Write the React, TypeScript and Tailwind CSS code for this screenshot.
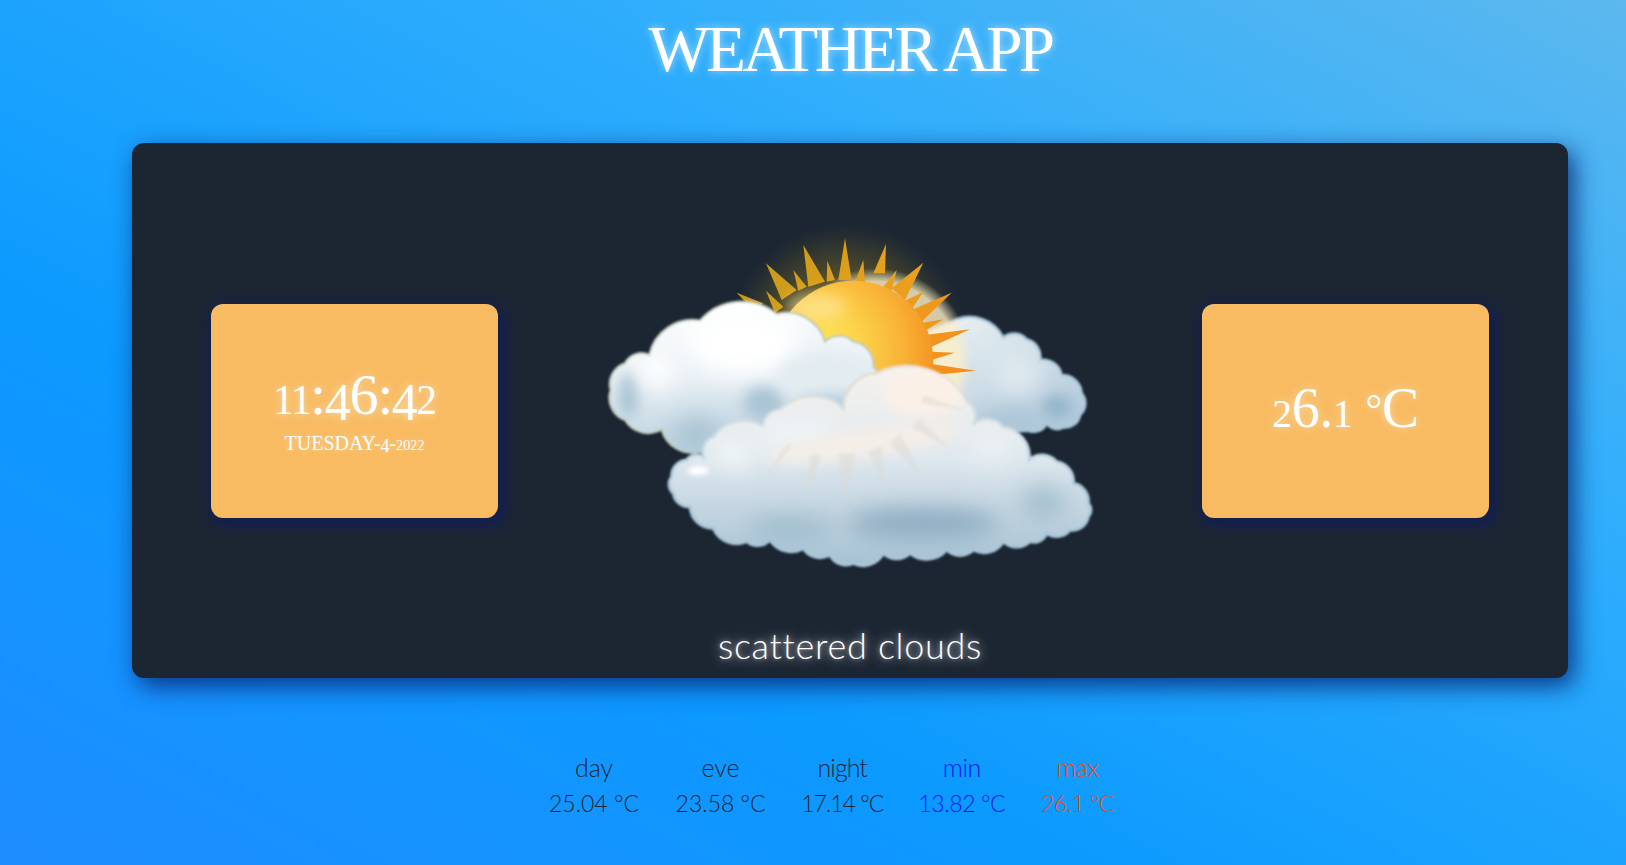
const serif = "font-['Liberation_Serif','Times_New_Roman',serif]";

function OldStyle({ text }: { text: string }) {
  return (
    <>
      {text.split("").map((c, i) => {
        if ("012".includes(c)) {
          return (
            <span key={i} className="text-[0.71em]">
              {c}
            </span>
          );
        }
        if ("34579".includes(c)) {
          return (
            <span key={i} className="inline-block translate-y-[0.12em] text-[0.9em] leading-none">
              {c}
            </span>
          );
        }
        return <span key={i}>{c}</span>;
      })}
    </>
  );
}

type P = [number, number] | [number, number, number];

function outline(pts: P[]) {
  let d = `M${pts[0][0]} ${pts[0][1]}`;
  for (let i = 1; i <= pts.length; i++) {
    const a = pts[i - 1];
    const b = pts[i % pts.length];
    if (a.length === 3) {
      d += ` L${b[0]} ${b[1]}`;
    } else {
      const r = Math.hypot(b[0] - a[0], b[1] - a[1]) * 0.72;
      d += ` A${r.toFixed(1)} ${r.toFixed(1)} 0 0 1 ${b[0]} ${b[1]}`;
    }
  }
  return d + " Z";
}

const backLeft = outline([
  [62, 510], [105, 430], [178, 405], [330, 302], [560, 282], [705, 365], [790, 365], [850, 440],
  [860, 470, 1], [800, 700, 1], [330, 695], [215, 628], [105, 600],
]);
const backRight = outline([
  [1000, 340, 1], [1090, 302], [1240, 352], [1310, 358], [1350, 420], [1415, 465], [1475, 520],
  [1470, 585], [1420, 622], [1370, 610], [1315, 632, 1], [1200, 640, 1], [1000, 520, 1],
]);
const front = outline([
  [860, 460], [1130, 545], [1150, 612], [1240, 622], [1318, 718], [1400, 725], [1450, 790],
  [1495, 850], [1495, 890], [1440, 930], [1370, 940], [1320, 965], [1240, 965], [1150, 990],
  [1070, 990], [960, 1000], [880, 1000], [790, 1030], [720, 1005], [640, 985], [540, 960],
  [470, 965], [370, 925], [300, 860], [250, 820], [245, 770], [290, 720], [340, 710], [370, 650],
  [520, 620], [570, 570], [760, 565],
]);

const rays: [number, number, number, number, number, number][] = [
  [440, 218, 520, 250, 490, 270],
  [528, 212, 580, 260, 555, 280],
  [528, 130, 620, 210, 575, 240],
  [610, 150, 650, 200, 625, 212],
  [640, 75, 705, 185, 655, 200],
  [712, 122, 735, 180, 710, 185],
  [765, 55, 785, 180, 745, 180],
  [820, 120, 825, 190, 795, 185],
  [888, 72, 885, 160, 850, 160],
  [920, 150, 905, 215, 880, 200],
  [1000, 128, 945, 240, 905, 205],
  [1000, 215, 960, 275, 940, 245],
  [1085, 218, 990, 310, 965, 270],
  [1060, 298, 1000, 335, 990, 310],
  [1140, 328, 1015, 385, 1005, 345],
  [1095, 398, 1025, 420, 1020, 395],
  [1158, 452, 1030, 465, 1025, 432],
];

const F = { x: "-150%", y: "-150%", width: "400%", height: "400%" };

function WeatherIcon() {
  return (
    <svg viewBox="0 0 1560 1080" className="mb-[22px] h-[360px] w-[520px] shrink-0">
      <defs>
        <radialGradient id="sun" cx="0.3" cy="0.42" r="0.75">
          <stop offset="0" stopColor="#fde657" />
          <stop offset="0.3" stopColor="#fcd54c" />
          <stop offset="0.68" stopColor="#f9b236" />
          <stop offset="1" stopColor="#f28f1f" />
        </radialGradient>
        <radialGradient id="halo">
          <stop offset="0.5" stopColor="#b8961f" stopOpacity="0.42" />
          <stop offset="0.8" stopColor="#8f7c20" stopOpacity="0.2" />
          <stop offset="1" stopColor="#6a6420" stopOpacity="0" />
        </radialGradient>
        <radialGradient id="glow">
          <stop offset="0.86" stopColor="#fbeec6" stopOpacity="0.8" />
          <stop offset="1" stopColor="#fbeec6" stopOpacity="0" />
        </radialGradient>
        <linearGradient id="ray" gradientUnits="userSpaceOnUse" x1="560" y1="100" x2="1100" y2="460">
          <stop offset="0" stopColor="#c99a1a" />
          <stop offset="0.5" stopColor="#e8a21e" />
          <stop offset="1" stopColor="#f58d1c" />
        </linearGradient>
        <linearGradient id="cl" x1="0.35" y1="0" x2="0.5" y2="1">
          <stop offset="0" stopColor="#ffffff" />
          <stop offset="0.5" stopColor="#e6eef3" />
          <stop offset="1" stopColor="#b4cddb" />
        </linearGradient>
        <linearGradient id="cr" x1="0" y1="0" x2="0.8" y2="1">
          <stop offset="0" stopColor="#eef3f5" />
          <stop offset="1" stopColor="#b2cadb" />
        </linearGradient>
        <linearGradient id="cf" x1="0.5" y1="0" x2="0.5" y2="1">
          <stop offset="0" stopColor="#f6f2ee" />
          <stop offset="0.45" stopColor="#dfe8ee" />
          <stop offset="1" stopColor="#a7c2d3" />
        </linearGradient>
        <linearGradient id="rim" gradientUnits="userSpaceOnUse" x1="800" y1="440" x2="800" y2="800">
          <stop offset="0" stopColor="#e8e0d2" />
          <stop offset="0.5" stopColor="#cfdde5" />
          <stop offset="1" stopColor="#a9c6d8" />
        </linearGradient>
        <filter id="b2"><feGaussianBlur stdDeviation="2.5" /></filter>
        <filter id="b6" {...F}><feGaussianBlur stdDeviation="6" /></filter>
        <filter id="b20" {...F}><feGaussianBlur stdDeviation="20" /></filter>
        <filter id="b35" {...F}><feGaussianBlur stdDeviation="35" /></filter>
        <clipPath id="clipL"><path d={backLeft} /></clipPath>
        <clipPath id="clipR"><path d={backRight} /></clipPath>
        <clipPath id="clipF"><path d={front} /></clipPath>
      </defs>

      <circle cx="770" cy="370" r="360" fill="url(#halo)" />
      <g filter="url(#b2)">
        <path d={backRight} fill="url(#cr)" stroke="#a9c6d8" strokeWidth="8" />
        <g clipPath="url(#clipR)">
          <ellipse cx="1280" cy="460" rx="70" ry="70" fill="#dfe9ef" filter="url(#b35)" />
          <ellipse cx="1400" cy="560" rx="45" ry="35" fill="#93b4c9" filter="url(#b20)" />
          <ellipse cx="1260" cy="600" rx="120" ry="30" fill="#a4c1d3" filter="url(#b35)" />
        </g>
      </g>
      <circle cx="860" cy="430" r="285" fill="url(#glow)" />
      {rays.map((r, i) => (
        <polygon key={i} points={`${r[0]},${r[1]} ${r[2]},${r[3]} ${r[4]},${r[5]}`} fill="url(#ray)" />
      ))}
      <circle cx="790" cy="422" r="240" fill="url(#sun)" />
      <ellipse cx="680" cy="260" rx="90" ry="40" fill="#fde9a6" opacity="0.6" filter="url(#b20)" />

      <g filter="url(#b2)">
        <path d={backLeft} fill="url(#cl)" stroke="#c2cbbf" strokeWidth="7" />
        <g clipPath="url(#clipL)">
          <ellipse cx="460" cy="370" rx="170" ry="100" fill="#ffffff" filter="url(#b35)" />
          <ellipse cx="115" cy="525" rx="30" ry="70" fill="#a8c3d3" filter="url(#b20)" />
          <ellipse cx="200" cy="450" rx="60" ry="50" fill="#ffffff" filter="url(#b35)" />
          <ellipse cx="320" cy="640" rx="70" ry="45" fill="#a6c1d2" filter="url(#b35)" />
          <ellipse cx="520" cy="550" rx="60" ry="50" fill="#a9c4d4" filter="url(#b20)" />
          <ellipse cx="690" cy="470" rx="130" ry="70" fill="#e3ecf1" filter="url(#b20)" />
          <ellipse cx="720" cy="550" rx="90" ry="24" fill="#b2cad9" filter="url(#b20)" />
        </g>

        <path d={front} fill="url(#cf)" stroke="url(#rim)" strokeWidth="9" />
        <g clipPath="url(#clipF)">
          <ellipse cx="1000" cy="520" rx="120" ry="70" fill="#fcf0e6" filter="url(#b20)" />
          <ellipse cx="620" cy="640" rx="120" ry="50" fill="#eff4f7" filter="url(#b35)" />
          <ellipse cx="325" cy="752" rx="32" ry="14" fill="#ffffff" filter="url(#b6)" />
          <ellipse cx="430" cy="700" rx="60" ry="45" fill="#f2f6f8" filter="url(#b35)" />
          <ellipse cx="1200" cy="680" rx="60" ry="40" fill="#eef3f6" filter="url(#b35)" />
          <ellipse cx="1000" cy="910" rx="230" ry="42" fill="#8aa9bf" filter="url(#b35)" />
          <ellipse cx="600" cy="925" rx="130" ry="30" fill="#9ab8cb" filter="url(#b35)" />
          <ellipse cx="1360" cy="850" rx="70" ry="50" fill="#a3bfcf" filter="url(#b35)" />
          <ellipse cx="820" cy="670" rx="300" ry="40" fill="#f5eee7" filter="url(#b20)" transform="rotate(-8 820 670)" />
          <g opacity="0.55" fill="#dcdad4" filter="url(#b2)">
            <polygon points="530,770 610,670 585,680" />
            <polygon points="645,830 695,705 662,702" />
            <polygon points="765,845 795,700 745,702" />
            <polygon points="880,790 875,680 835,692" />
            <polygon points="995,770 930,640 900,670" />
            <polygon points="1080,685 985,595 970,625" />
            <polygon points="1130,572 1000,525 995,550" />
          </g>
        </g>
      </g>
    </svg>
  );
}

function Stat({
  label,
  value,
  color,
  width,
}: {
  label: string;
  value: string;
  color: string;
  width: string;
}) {
  return (
    <div className={`flex flex-col items-center whitespace-nowrap ${color} ${width}`}>
      <span className="text-[25px] leading-[36px]">{label}</span>
      <span className="text-[23px] leading-[36px]">{value}</span>
    </div>
  );
}

export default function App() {
  return (
    <div className="relative h-[865px] w-full overflow-hidden bg-[linear-gradient(to_top_right,#1e8cff_0%,#0c9aff_33%,#31aefc_70%,#5cb8ee_100%)] font-['Lato','Open_Sans',sans-serif] font-light">
      <div className="ml-[132px] w-[1436px]">
        <h1 className={`${serif} h-[143px] pt-[13px] text-center text-[65px] leading-[72px] tracking-[-3.6px] text-white [text-shadow:0_0_8px_rgba(255,255,255,0.6)]`}>
          WEATHER APP
        </h1>
        <div className="flex h-[535px] flex-col rounded-xl bg-[#1c2633] shadow-[6px_8px_24px_rgba(8,35,110,0.85)]">
          <div className="flex h-[482px] items-center justify-between px-[79px] pt-[54px]">
            <div className={`${serif} flex h-[214px] w-[287px] flex-col items-center justify-center rounded-xl bg-[#f8bb62] text-white shadow-[3px_4px_12px_5px_#141f50]`}>
              <div className="text-[58px] leading-[60px] tracking-[-1.4px] [text-shadow:0_0_8px_rgba(255,255,255,0.55)]">
                <OldStyle text="11:46:42" />
              </div>
              <div className="text-[20px] leading-[26px] [text-shadow:0_0_6px_rgba(255,255,255,0.4)]">
                TUESDAY-<OldStyle text="4" />-<OldStyle text="2022" />
              </div>
            </div>
            <WeatherIcon />
            <div className={`${serif} flex h-[214px] w-[287px] items-center justify-center rounded-xl bg-[#f8bb62] text-[56px] leading-[60px] tracking-[-0.5px] text-white shadow-[3px_4px_12px_5px_#141f50] [text-shadow:0_0_8px_rgba(255,255,255,0.5)]`}>
              <span>
                <OldStyle text="26.1" />
                {" "}
                <span className="inline-block -translate-y-[4px] text-[0.75em]">°</span>C
              </span>
            </div>
          </div>
          <div className="text-center text-[36px] leading-[40px] tracking-[0.7px] text-white [text-shadow:0_0_12px_rgba(255,255,255,0.8),0_0_4px_rgba(255,255,255,0.4)]">
            scattered clouds
          </div>
        </div>
      </div>
      <div className="ml-[550px] mt-[71px] flex gap-[38.6px]">
        <Stat label="day" value="25.04 °C" color="text-[#1c2633]" width="w-[88px]" />
        <Stat label="eve" value="23.58 °C" color="text-[#1c2633]" width="w-[88px]" />
        <Stat label="night" value="17.14 °C" color="text-[#1c2633] tracking-[-1px]" width="w-[78px]" />
        <Stat label="min" value="13.82 °C" color="text-[#0a14f5] tracking-[-0.4px]" width="w-[84px]" />
        <Stat label="max" value="26.1 °C" color="text-[#f0480f] tracking-[-0.6px]" width="w-[70px]" />
      </div>
    </div>
  );
}
